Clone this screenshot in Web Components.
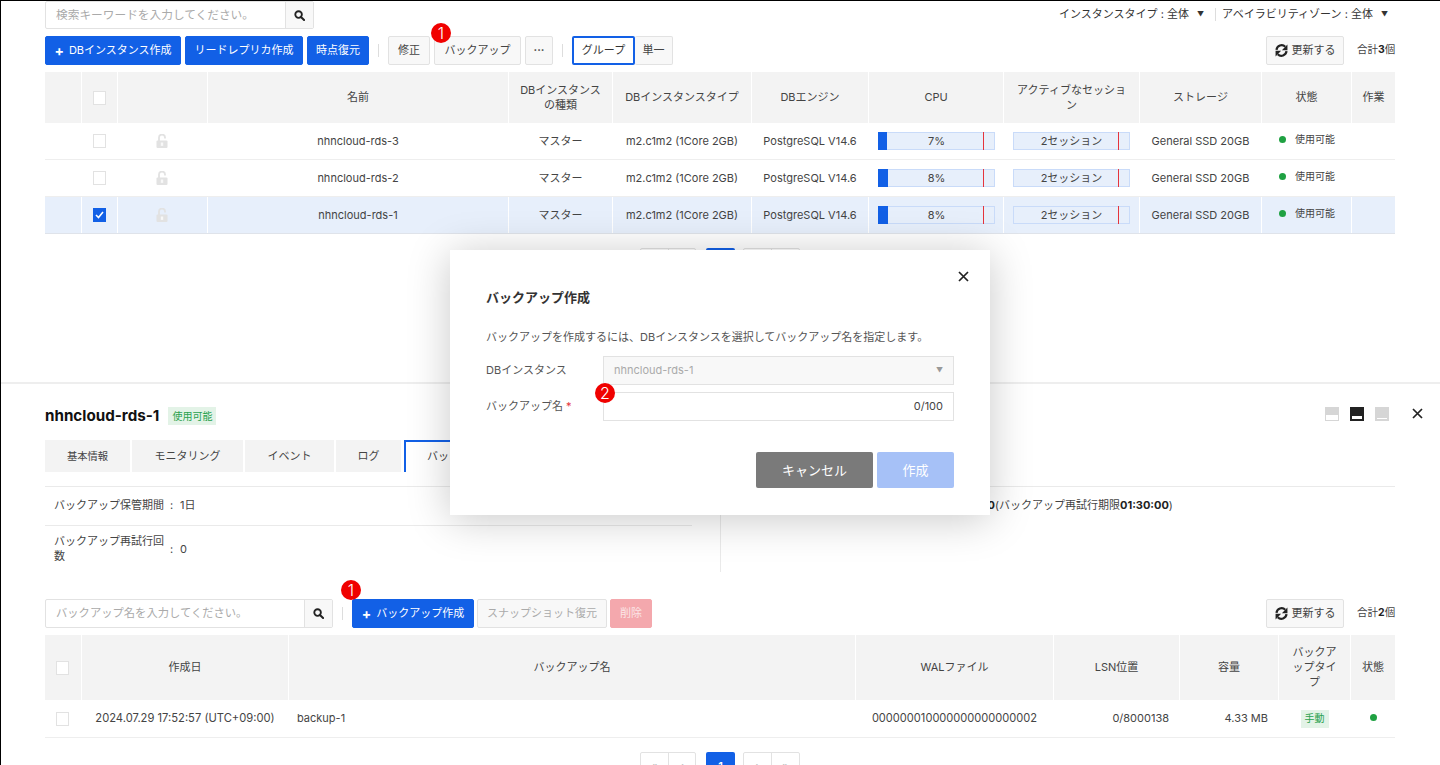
<!DOCTYPE html>
<html lang="ja">
<head>
<meta charset="utf-8">
<title>RDS</title>
<style>
html, body { margin: 0; height: 765px; overflow: hidden; background: #fff; }
body { font: 12px/1.4 Inter, "Noto Sans CJK JP", sans-serif; color: #333; }
</style>
</head>
<body>
<rds-screen></rds-screen>
<script>
const SEARCH_ICON = `<svg width="11" height="11" viewBox="0 0 12 12"><circle cx="5" cy="5" r="3.6" fill="none" stroke="#222" stroke-width="2"/><path d="M7.6 7.6L11 11" stroke="#222" stroke-width="2.2" stroke-linecap="round"/></svg>`;
const REFRESH_ICON = `<svg width="13" height="13" viewBox="0 0 14 14" style="flex:none"><path d="M1.6 6.2A5.5 5.5 0 0 1 11 3" fill="none" stroke="#222" stroke-width="2.4"/><path d="M13.4 .6v6H7.4z" fill="#222"/><path d="M12.4 7.8A5.5 5.5 0 0 1 3 11" fill="none" stroke="#222" stroke-width="2.4"/><path d="M.6 13.4v-6h6z" fill="#222"/></svg>`;
const LOCK_ICON = `<svg width="12" height="14" viewBox="0 0 12 14" style="margin-right:1px"><path d="M3 7V3.6a3 3 0 0 1 6 0V4.4" fill="none" stroke="#e2e2e2" stroke-width="1.8"/><rect x="0.5" y="6.5" width="11" height="7.5" rx="1" fill="#e2e2e2"/><rect x="4.8" y="8.5" width="2.4" height="3.4" fill="#f8f8f8"/></svg>`;
const CLOSE_ICON = `<svg width="11" height="11" viewBox="0 0 11 11"><path d="M1 1l9 9M10 1l-9 9" stroke="#222" stroke-width="1.7"/></svg>`;

class UiBtn extends HTMLElement {
    constructor() {
        super();
        this.attachShadow({ mode: 'open' });
    }
    connectedCallback() {
        this.shadowRoot.innerHTML = `
            <style>
                :host { display: inline-flex; position: relative; align-items: center; justify-content: center; gap: 5px;
                    box-sizing: border-box; height: 29px; padding: 0 10px; font-size: 11px; white-space: nowrap;
                    background: #f8f8f8; border: 1px solid #e2e2e2; border-radius: 2px; color: #444; }
                :host([kind=primary]) { background: #1260e6; border-color: #1260e6; color: #fff; }
                :host([kind=outline]) { background: #fff; border: 2px solid #1260e6; color: #333; }
                :host([kind=disabled]) { color: #aaa; }
                :host([kind=danger]) { background: #f4a8ad; border-color: #f4a8ad; color: #fbe6e7; }
                .plus { font-size: 14px; font-weight: 700; line-height: 1; }
            </style>
            ${this.hasAttribute('plus') ? '<span class="plus">+</span>' : ''}
            <slot></slot>
        `;
    }
}
customElements.define('ui-btn', UiBtn);

class SearchBox extends HTMLElement {
    constructor() {
        super();
        this.attachShadow({ mode: 'open' });
    }
    connectedCallback() {
        this.shadowRoot.innerHTML = `
            <style>
                :host { display: flex; box-sizing: border-box; height: var(--h, 29px); width: var(--w, 269px);
                    border: 1px solid #e2e2e2; border-radius: 2px; background: #fff; }
                .text { flex: 1; padding: 0 10px; align-self: center; font-size: var(--fs, 11.7px); color: #aaa; white-space: nowrap; overflow: hidden; }
                .go { width: 28px; box-sizing: border-box; display: flex; align-items: center; justify-content: center;
                    background: #f8f8f8; border-left: 1px solid #e2e2e2; }
            </style>
            <div class="text">${this.getAttribute('placeholder')}</div>
            <div class="go">${SEARCH_ICON}</div>
        `;
    }
}
customElements.define('search-box', SearchBox);

class StepBadge extends HTMLElement {
    constructor() {
        super();
        this.attachShadow({ mode: 'open' });
    }
    connectedCallback() {
        this.shadowRoot.innerHTML = `
            <style>
                :host { position: absolute; z-index: 5; width: 20px; height: 20px; border-radius: 50%; background: #f00100;
                    color: #fff; font-size: 16px; line-height: 20px; text-align: center; font-weight: 300; }
            </style>
            <slot></slot>
        `;
    }
}
customElements.define('step-badge', StepBadge);

class CheckBox extends HTMLElement {
    constructor() {
        super();
        this.attachShadow({ mode: 'open' });
    }
    connectedCallback() {
        this.shadowRoot.innerHTML = `
            <style>
                :host { display: flex; align-items: center; justify-content: center; box-sizing: border-box;
                    width: 13px; height: 14px; background: #fff; border: 1px solid #e2e2e2; }
                :host([checked]) { background: #1260e6; border-color: #1260e6; }
            </style>
            ${this.hasAttribute('checked') ? '<svg width="9" height="8" viewBox="0 0 9 8"><path d="M1 4l2.5 2.5L8 1" fill="none" stroke="#fff" stroke-width="1.6"/></svg>' : ''}
        `;
    }
}
customElements.define('check-box', CheckBox);

class UsageBar extends HTMLElement {
    constructor() {
        super();
        this.attachShadow({ mode: 'open' });
    }
    connectedCallback() {
        const fill = this.getAttribute('fill') || 0;
        this.shadowRoot.innerHTML = `
            <style>
                :host { display: block; position: relative; box-sizing: border-box; width: 117px; height: 18px;
                    background: #e7effb; border: 1px solid #c9dbf9; font-size: 11px; line-height: 16px; text-align: center; color: #444; }
                .fill { position: absolute; left: -1px; top: -1px; bottom: -1px; width: ${fill}px; background: #1260e6; }
                .mark { position: absolute; left: 104px; top: -1px; bottom: -1px; width: 1px; background: #e5343c; }
            </style>
            <div class="fill"></div>
            <div class="mark"></div>
            <slot></slot>
        `;
    }
}
customElements.define('usage-bar', UsageBar);

class StatusDot extends HTMLElement {
    constructor() {
        super();
        this.attachShadow({ mode: 'open' });
    }
    connectedCallback() {
        this.shadowRoot.innerHTML = `
            <style>
                :host { display: flex; align-items: center; gap: 9px; font-size: 10px; color: #444; margin-top: -3px; width: 100%; padding-left: 8px; box-sizing: border-box; white-space: nowrap; }
                :host([solo]) { padding: 0; justify-content: center; }
                i { width: 7px; height: 7px; border-radius: 50%; background: #1fa142; flex: none; }
            </style>
            <i></i><slot></slot>
        `;
    }
}
customElements.define('status-dot', StatusDot);

class TagLabel extends HTMLElement {
    constructor() {
        super();
        this.attachShadow({ mode: 'open' });
    }
    connectedCallback() {
        this.shadowRoot.innerHTML = `
            <style>
                :host { display: inline-flex; align-items: center; justify-content: center; height: 18px; padding: 0 4px;
                    background: #e3f3e7; color: #2aa14e; font-size: 10px; white-space: nowrap; }
            </style>
            <slot></slot>
        `;
    }
}
customElements.define('tag-label', TagLabel);

class GridRow extends HTMLElement {
    constructor() {
        super();
        this.attachShadow({ mode: 'open' });
    }
    connectedCallback() {
        this.shadowRoot.innerHTML = `
            <style>
                :host { display: grid; grid-template-columns: var(--cols); height: 37px; box-sizing: border-box; border-bottom: 1px solid #eee; }
                :host([head]) { background: #f3f3f3; height: var(--head-h, 51px); border-bottom: 0; }
                :host([selected]) { background: #e7effb; border-bottom-color: #dfe3ea; }
            </style>
            <slot></slot>
        `;
    }
}
customElements.define('grid-row', GridRow);

class GridCell extends HTMLElement {
    constructor() {
        super();
        this.attachShadow({ mode: 'open' });
    }
    connectedCallback() {
        this.shadowRoot.innerHTML = `
            <style>
                :host { display: flex; align-items: center; justify-content: center; text-align: center; box-sizing: border-box;
                    min-width: 0; padding: 0 8px; border-right: 1px solid #fff; line-height: 15px; font-size: 11px; color: #444; }
                :host(:last-child) { border-right: 0; }
                :host([align=left]) { justify-content: flex-start; }
                :host([align=right]) { justify-content: flex-end; padding-right: 10px; }
                :host([flush]) { padding: 0 8px 0 9px; }
            </style>
            <slot></slot>
        `;
    }
}
customElements.define('grid-cell', GridCell);

class PagerNav extends HTMLElement {
    constructor() {
        super();
        this.attachShadow({ mode: 'open' });
    }
    connectedCallback() {
        this.shadowRoot.innerHTML = `
            <style>
                :host { display: flex; justify-content: center; font-size: 11px; color: #bbb; }
                .group { display: flex; width: 56px; border: 1px solid #e2e2e2; border-radius: 2px; height: 29px; box-sizing: border-box; }
                .group + .now + .group { width: 57px; }
                .group span { flex: 1; display: flex; align-items: center; justify-content: center; }
                .group span + span { border-left: 1px solid #e2e2e2; }
                .now { width: 29px; height: 29px; margin: 0 8px 0 10px; background: #1260e6; color: #fff; border-radius: 2px; display: flex; align-items: center; justify-content: center; font-weight: 600; }
            </style>
            <div class="group"><span>«</span><span>‹</span></div>
            <div class="now">1</div>
            <div class="group"><span>›</span><span>»</span></div>
        `;
    }
}
customElements.define('pager-nav', PagerNav);

class ToolRow extends HTMLElement {
    constructor() {
        super();
        this.attachShadow({ mode: 'open' });
    }
    connectedCallback() {
        this.shadowRoot.innerHTML = `
            <style>
                :host { display: flex; align-items: center; gap: 4px; height: 29px; }
                .right { margin-left: auto; display: flex; align-items: center; }
                .count { margin-left: 13px; width: 38px; font-size: 10.5px; white-space: nowrap; color: #444; }
                b { color: #222; }
            </style>
            <slot></slot>
            <div class="right">
                <ui-btn style="width:78px;gap:4px;padding:0">${REFRESH_ICON}更新する</ui-btn>
                <div class="count">合計<b>${this.getAttribute('total')}</b>個</div>
            </div>
        `;
    }
}
customElements.define('tool-row', ToolRow);

class ToolSep extends HTMLElement {
    constructor() {
        super();
        this.attachShadow({ mode: 'open' });
    }
    connectedCallback() {
        this.shadowRoot.innerHTML = `
            <style>
                :host { display: block; width: 1px; height: 13px; background: #ddd; margin: 0 5px; }
            </style>
        `;
    }
}
customElements.define('tool-sep', ToolSep);

class InstancePanel extends HTMLElement {
    constructor() {
        super();
        this.attachShadow({ mode: 'open' });
    }
    row(name, cpu, fill, selected) {
        const mark = selected ? 'selected' : '';
        return `
            <grid-row ${mark}>
                <grid-cell></grid-cell>
                <grid-cell><check-box ${selected ? 'checked' : ''}></check-box></grid-cell>
                <grid-cell>${LOCK_ICON}</grid-cell>
                <grid-cell>${name}</grid-cell>
                <grid-cell>マスター</grid-cell>
                <grid-cell>m2.c1m2 (1Core 2GB)</grid-cell>
                <grid-cell>PostgreSQL V14.6</grid-cell>
                <grid-cell><usage-bar fill="${fill}" style="margin-left:1px">${cpu}</usage-bar></grid-cell>
                <grid-cell><usage-bar>2セッション</usage-bar></grid-cell>
                <grid-cell>General SSD 20GB</grid-cell>
                <grid-cell flush><status-dot>使用可能</status-dot></grid-cell>
                <grid-cell></grid-cell>
            </grid-row>`;
    }
    connectedCallback() {
        this.shadowRoot.innerHTML = `
            <style>
                :host { display: block; box-sizing: border-box; height: 381px; padding: 0 45px 0 44px; overflow: hidden; }
                .top { display: flex; justify-content: space-between; align-items: center; height: 28px; margin-bottom: 7px; }
                .filters { display: flex; align-items: center; font-size: 11px; color: #333; padding-right: 7px; }
                .filters i { font-style: normal; font-size: 7px; margin-left: 8px; }
                .filters u { width: 1px; height: 13px; background: #ddd; margin: 0 6px 0 11px; }
                .grid { --cols: 37px 36px 90px 301px 104px 139px 117px 135px 136px 122px 90px 43px; margin-top: 7px; }
                pager-nav { margin-top: 14px; }
            </style>
            <div class="top">
                <search-box style="--h:28px" placeholder="検索キーワードを入力してください。"></search-box>
                <div class="filters">
                    <span>インスタンスタイプ : 全体</span><i>▼</i><u></u>
                    <span>アベイラビリティゾーン : 全体</span><i>▼</i>
                </div>
            </div>
            <tool-row total="3">
                <ui-btn kind="primary" plus style="width:136px">DBインスタンス作成</ui-btn>
                <ui-btn kind="primary" style="width:118px">リードレプリカ作成</ui-btn>
                <ui-btn kind="primary" style="width:62px">時点復元</ui-btn>
                <tool-sep></tool-sep>
                <ui-btn style="width:42px">修正</ui-btn>
                <ui-btn style="width:87px"><step-badge style="left:-4px;top:-14px">1</step-badge>バックアップ</ui-btn>
                <ui-btn style="width:28px;font-weight:700">···</ui-btn>
                <tool-sep></tool-sep>
                <ui-btn kind="outline" style="width:63px;margin-right:-4px">グループ</ui-btn>
                <ui-btn style="width:38px;border-left:0">単一</ui-btn>
            </tool-row>
            <div class="grid">
                <grid-row head>
                    <grid-cell></grid-cell>
                    <grid-cell><check-box></check-box></grid-cell>
                    <grid-cell></grid-cell>
                    <grid-cell>名前</grid-cell>
                    <grid-cell>DBインスタンスの種類</grid-cell>
                    <grid-cell>DBインスタンスタイプ</grid-cell>
                    <grid-cell>DBエンジン</grid-cell>
                    <grid-cell>CPU</grid-cell>
                    <grid-cell>アクティブなセッション</grid-cell>
                    <grid-cell>ストレージ</grid-cell>
                    <grid-cell>状態</grid-cell>
                    <grid-cell>作業</grid-cell>
                </grid-row>
                ${this.row('nhncloud-rds-3', '7%', 9, false)}
                ${this.row('nhncloud-rds-2', '8%', 10, false)}
                ${this.row('nhncloud-rds-1', '8%', 10, true)}
            </div>
            <pager-nav></pager-nav>
        `;
    }
}
customElements.define('instance-panel', InstancePanel);

class BackupPanel extends HTMLElement {
    constructor() {
        super();
        this.attachShadow({ mode: 'open' });
    }
    connectedCallback() {
        this.shadowRoot.innerHTML = `
            <style>
                :host { display: block; box-sizing: border-box; padding: 23px 45px 0 44px; border-top: 2px solid #eee; }
                .title { display: flex; align-items: center; height: 18px; }
                h2 { margin: 0 9px 0 0; font-size: 15.2px; line-height: 18px; font-weight: 700; color: #111; }
                .win { margin: -5px -28px 0 auto; display: flex; align-items: center; gap: 11px; }
                .win i { display: block; width: 14px; height: 14px; background: #d6d6d6; position: relative; }
                .win i::after { content: ""; position: absolute; left: 1px; right: 1px; bottom: 1px; height: 5px; background: #fff; }
                .win i.on { background: #222; }
                .win i.on::after { left: 2px; right: 2px; bottom: 2px; height: 3px; }
                .win i.low::after { left: 2px; right: 2px; bottom: 2px; height: 1px; }
                .win svg { display: block; margin-left: 12px; }
                .tabs { display: flex; gap: 2px; margin-top: 15px; height: 32px; }
                .tabs div { display: flex; align-items: center; justify-content: center; background: #f3f3f3; font-size: 11px; color: #444; box-sizing: border-box; padding-top: 1px; }
                .tabs .on { background: #fff; border-top: 2px solid #1260e6; border-left: 2px solid #1260e6; margin-left: 1px; width: 110px; padding-top: 0; }
                .info { display: grid; grid-template-columns: 676px 1fr; margin-top: 14px; border-top: 1px solid #eaeaea; font-size: 11px; color: #444; }
                .left { border-right: 1px solid #eaeaea; padding-right: 28px; }
                .item { display: flex; align-items: center; padding-left: 9px; box-sizing: border-box; line-height: 15px; }
                .item.one { height: 39px; border-bottom: 1px solid #eaeaea; padding-bottom: 2px; }
                .item.two { height: 46px; }
                .item .k { width: 110px; flex: none; }
                .item .s { width: 10px; margin-left: 6px; flex: none; }
                .right .item { white-space: nowrap; border-bottom: 0; }
                b { color: #222; }
                tool-row { margin-top: 27px; }
                .grid { --cols: 37px 207px 567px 198px 126px 99px 72px 44px; --head-h: 65px; margin-top: 7px; }
                pager-nav { margin-top: 14px; }
            </style>
            <div class="title">
                <h2>nhncloud-rds-1</h2>
                <tag-label>使用可能</tag-label>
                <div class="win"><i></i><i class="on"></i><i class="low"></i>${CLOSE_ICON}</div>
            </div>
            <div class="tabs">
                <div style="width:85px;font-size:10.3px">基本情報</div>
                <div style="width:111px">モニタリング</div>
                <div style="width:89px">イベント</div>
                <div style="width:65px">ログ</div>
                <div class="on">バックアップ</div>
            </div>
            <div class="info">
                <div class="left">
                    <div class="item one"><span class="k">バックアップ保管期間</span><span class="s">:</span><span>1日</span></div>
                    <div class="item two"><span class="k">バックアップ再試行回数</span><span class="s">:</span><span>0</span></div>
                </div>
                <div class="right">
                    <div class="item one"><span class="k">バックアップ実行時間</span><span class="s">:</span><span style="margin-left:62px">開始 <b>00:00:00</b>(バックアップ再試行期限<b>01:30:00</b>)</span></div>
                </div>
            </div>
            <tool-row total="2">
                <search-box style="--w:288px;--fs:11.3px" placeholder="バックアップ名を入力してください。"></search-box>
                <tool-sep></tool-sep>
                <ui-btn kind="primary" plus style="width:122px"><step-badge style="left:-12px;top:-20px">1</step-badge>バックアップ作成</ui-btn>
                <ui-btn kind="disabled" style="width:130px;margin-left:-1px">スナップショット復元</ui-btn>
                <ui-btn kind="danger" style="width:42px;margin-left:-1px">削除</ui-btn>
            </tool-row>
            <div class="grid">
                <grid-row head>
                    <grid-cell><check-box style="margin-right:1px"></check-box></grid-cell>
                    <grid-cell>作成日</grid-cell>
                    <grid-cell>バックアップ名</grid-cell>
                    <grid-cell>WALファイル</grid-cell>
                    <grid-cell>LSN位置</grid-cell>
                    <grid-cell>容量</grid-cell>
                    <grid-cell style="padding:0 12px">バックアップタイプ</grid-cell>
                    <grid-cell>状態</grid-cell>
                </grid-row>
                <grid-row style="height:38px">
                    <grid-cell><check-box style="margin-right:1px"></check-box></grid-cell>
                    <grid-cell style="font-size:11.2px">2024.07.29 17:52:57 (UTC+09:00)</grid-cell>
                    <grid-cell align="left">backup-1</grid-cell>
                    <grid-cell style="font-size:11.1px">000000010000000000000002</grid-cell>
                    <grid-cell align="right">0/8000138</grid-cell>
                    <grid-cell align="right">4.33 MB</grid-cell>
                    <grid-cell><tag-label>手動</tag-label></grid-cell>
                    <grid-cell><status-dot solo></status-dot></grid-cell>
                </grid-row>
            </div>
            <pager-nav></pager-nav>
        `;
    }
}
customElements.define('backup-panel', BackupPanel);

class BackupDialog extends HTMLElement {
    constructor() {
        super();
        this.attachShadow({ mode: 'open' });
    }
    connectedCallback() {
        this.shadowRoot.innerHTML = `
            <style>
                :host { position: absolute; left: 449px; top: 249px; z-index: 10; width: 540px; height: 265px; box-sizing: border-box;
                    padding: 37px 36px 0; background: #fff; box-shadow: 0 4px 40px rgba(0,0,0,.22); font-size: 11px; color: #555; }
                .close { position: absolute; right: 21px; top: 21px; }
                h3 { margin: 0; font-size: 13px; line-height: 20px; font-weight: 700; color: #333; }
                p { margin: 20px 0 0; line-height: 20px; white-space: nowrap; }
                .field { display: flex; align-items: center; position: relative; }
                .field + .field { margin-top: 7px; }
                .first { margin-top: 9px; }
                label { width: 117px; flex: none; }
                label em { color: #e5343c; font-style: normal; }
                .ctl { position: relative; flex: 1; height: 29px; box-sizing: border-box; border: 1px solid #e2e2e2; display: flex; align-items: center; justify-content: space-between; padding: 0 10px; }
                .ctl.off { background: #f8f8f8; color: #aaa; }
                .ctl.off i { font-style: normal; font-size: 7px; color: #999; }
                .ctl.name { justify-content: flex-end; color: #444; }
                .actions { display: flex; justify-content: flex-end; gap: 4px; margin-top: 31px; }
                .actions div { height: 36px; display: flex; align-items: center; justify-content: center; color: #fff; font-size: 13px; border-radius: 2px; }
                .cancel { width: 117px; background: #7a7a7a; }
                .make { width: 77px; background: #a6c1f7; }
            </style>
            <div class="close">${CLOSE_ICON}</div>
            <h3>バックアップ作成</h3>
            <p>バックアップを作成するには、DBインスタンスを選択してバックアップ名を指定します。</p>
            <div class="field first"><label>DBインスタンス</label><div class="ctl off"><span>nhncloud-rds-1</span><i>▼</i></div></div>
            <div class="field"><label>バックアップ名 <em>*</em></label>
                <div class="ctl name"><step-badge style="left:-9px;top:-10px">2</step-badge>0/100</div></div>
            <div class="actions"><div class="cancel">キャンセル</div><div class="make">作成</div></div>
        `;
    }
}
customElements.define('backup-dialog', BackupDialog);

class RdsScreen extends HTMLElement {
    constructor() {
        super();
        this.attachShadow({ mode: 'open' });
    }
    connectedCallback() {
        this.shadowRoot.innerHTML = `
            <style>
                :host { display: block; position: relative; box-sizing: border-box; width: 1440px; height: 765px; overflow: hidden;
                    border-top: 1px solid #000; border-left: 1px solid #000; }
            </style>
            <instance-panel></instance-panel>
            <backup-panel></backup-panel>
            <backup-dialog></backup-dialog>
        `;
    }
}
customElements.define('rds-screen', RdsScreen);
</script>
</body>
</html>
